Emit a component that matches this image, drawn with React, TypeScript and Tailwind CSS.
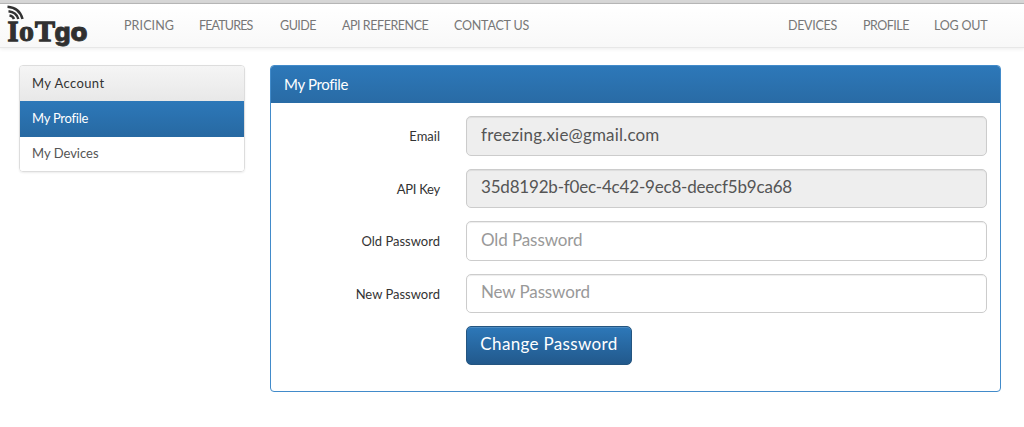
import React from "react";

type NavItem = { label: string; className: string };

const leftNav: NavItem[] = [
  { label: "PRICING", className: "w-[75px] tracking-[0.1px]" },
  { label: "FEATURES", className: "w-[81px] tracking-[-0.85px]" },
  { label: "GUIDE", className: "w-[62px] tracking-[-0.5px]" },
  { label: "API REFERENCE", className: "w-[112px] tracking-[-0.45px]" },
  { label: "CONTACT US", className: "w-[80px] tracking-[-0.2px]" },
];

const rightNav: NavItem[] = [
  { label: "DEVICES", className: "w-[75px] tracking-[-0.3px]" },
  { label: "PROFILE", className: "w-[71px] tracking-[-0.5px]" },
  { label: "LOG OUT", className: "w-[90px] tracking-[-0.2px]" },
];

function Logo() {
  return (
    <svg className="h-[44px] w-[92px] shrink-0" viewBox="0 0 92 44" role="img" aria-label="IoTgo">
      <g fill="none" stroke="#333" strokeWidth="2.5">
        <path d="M7.5 2.7Q19.500 3.500 22.500 15" />
        <path d="M8.500 7.200Q16.500 8 18.300 15" />
        <path d="M9.500 11.500Q13 12 14 15" />
      </g>
      <g fill="#303030" stroke="#303030" fontFamily="Liberation Serif, serif" fontSize="30" fontWeight="700">
        <text x="7.500" y="36.500" strokeWidth="1.300" textLength="11" lengthAdjust="spacingAndGlyphs">I</text>
        <text x="19" y="36.500" strokeWidth="1" textLength="15" lengthAdjust="spacingAndGlyphs">o</text>
        <text x="35" y="36.500" strokeWidth="1.300" textLength="20" lengthAdjust="spacingAndGlyphs">T</text>
      </g>
      <g fill="#303030" stroke="#303030" fontFamily="Inter, sans-serif" fontSize="25" fontWeight="800" strokeWidth="0.8">
        <text x="54.500" y="36.800" textLength="16" lengthAdjust="spacingAndGlyphs">g</text>
        <text x="70.500" y="36.800" textLength="17" lengthAdjust="spacingAndGlyphs">o</text>
      </g>
    </svg>
  );
}

function Field({ label, value, placeholder, labelClass, inputClass }: {
  label: string; value?: string; placeholder?: string; labelClass: string; inputClass: string;
}) {
  return (
    <div className="flex h-[39.5px] items-start">
      <label className={`w-[169px] shrink-0 pt-[10px] text-right text-[13px] leading-[20px] text-[#333] ${labelClass}`}>{label}</label>
      <input
        className={`ml-[26px] h-[39.5px] w-[521px] rounded-[5px] border border-[#ccc] px-[14px] pb-[3px] text-[17px] shadow-[inset_0_1px_1px_rgba(0,0,0,0.075)] placeholder:text-[#999] ${value ? "bg-[#eee] text-[#555]" : "bg-white"} ${inputClass}`}
        defaultValue={value}
        placeholder={placeholder}
        readOnly={Boolean(value)}
      />
    </div>
  );
}

export default function App() {
  return (
    <div className="h-[427px] w-[1024px] overflow-hidden bg-white font-['Lato',sans-serif]">
      <div className="h-[4px] border-b border-[#b8b8b8] bg-[#d6d6d6]" />
      <header className="flex h-[44px] border-b border-[#e7e7e7] bg-linear-to-b from-white to-[#f8f8f8] shadow-[0_1px_4px_rgba(0,0,0,0.08)]">
        <Logo />
        <nav className="ml-[32px] flex pt-[12px] text-[12.5px] leading-[20px] text-[#777]">
          {leftNav.map((item) => (
            <a key={item.label} className={`whitespace-nowrap ${item.className}`}>{item.label}</a>
          ))}
        </nav>
        <nav className="ml-auto flex pt-[12px] text-[12.5px] leading-[20px] text-[#777]">
          {rightNav.map((item) => (
            <a key={item.label} className={`whitespace-nowrap ${item.className}`}>{item.label}</a>
          ))}
        </nav>
      </header>
      <main className="flex items-start pt-[17px] pl-[19px]">
        <aside className="h-[107px] w-[226px] overflow-hidden rounded-[4px] border border-[#ddd] text-[13px] leading-[34px] shadow-[0_1px_2px_rgba(0,0,0,0.075)]">
          <div className="h-[35px] bg-linear-to-b from-[#f5f5f5] to-[#e8e8e8] pl-[12px] tracking-[0.4px] text-[#333]">My Account</div>
          <div className="h-[36px] bg-linear-to-b from-[#2d78b9] to-[#2769a2] pl-[12px] tracking-[-0.25px] text-white">My Profile</div>
          <div className="h-[34px] bg-white pl-[12px] leading-[33px] text-[#555]">My Devices</div>
        </aside>
        <section className="ml-[25px] h-[327px] w-[731px] overflow-hidden rounded-[4px] border border-[#428bca] bg-white">
          <h1 className="h-[37px] bg-linear-to-b from-[#2d78b9] to-[#296ba5] pl-[13px] text-[15px] leading-[36px] tracking-[-0.35px] text-white">My Profile</h1>
          <form className="flex flex-col gap-[13px] pt-[13px]">
            <Field label="Email" value="freezing.xie@gmail.com" labelClass="" inputClass="tracking-[0.18px]" />
            <Field label="API Key" value="35d8192b-f0ec-4c42-9ec8-deecf5b9ca68" labelClass="tracking-[-0.25px]" inputClass="tracking-[-0.19px]" />
            <Field label="Old Password" placeholder="Old Password" labelClass="" inputClass="tracking-[-0.1px]" />
            <Field label="New Password" placeholder="New Password" labelClass="" inputClass="tracking-[-0.12px]" />
            <button type="button" className="ml-[195px] h-[39px] w-[166px] rounded-[5px] border border-[#245580] bg-linear-to-b from-[#2d78b9] to-[#22598c] pb-[3px] text-[17px] tracking-[0.34px] whitespace-nowrap text-white shadow-[inset_0_1px_0_rgba(255,255,255,0.15)]">Change Password</button>
          </form>
        </section>
      </main>
    </div>
  );
}
